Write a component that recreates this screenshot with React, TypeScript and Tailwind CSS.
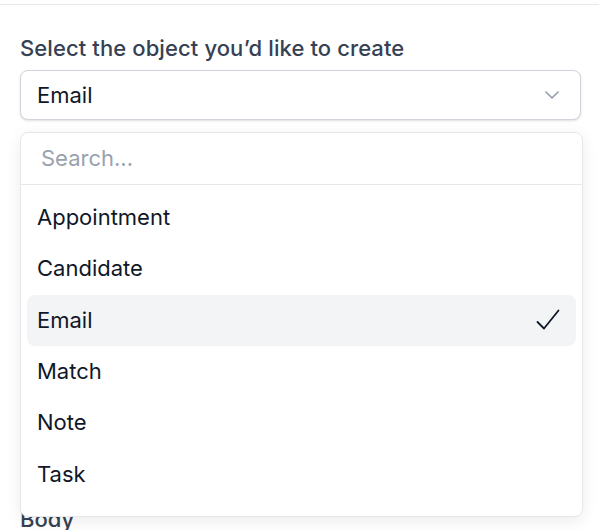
import { ChevronDown } from "lucide-react";

const OPTIONS = ["Appointment", "Candidate", "Email", "Match", "Note", "Task"];

export default function App() {
  const selected = "Email";

  return (
    <div className="min-h-screen bg-white font-['Inter',sans-serif] antialiased">
      <div className="mt-1 border-t border-gray-200 pl-5 pr-[18px] pt-7">
        <div className="relative">
          <label className="block text-[22px] font-medium leading-[30px] tracking-[0.1px] text-gray-700">
            Select the object you’d like to create
          </label>
          <button
            type="button"
            className="mt-[7px] flex h-[50px] w-full items-center justify-between rounded-lg border border-gray-300 bg-white px-4 text-left text-[22px] text-gray-900 shadow-sm"
          >
            <span>{selected}</span>
            <ChevronDown className="size-6 text-gray-400" strokeWidth={1.75} />
          </button>

          <div className="absolute left-0 right-[-2px] top-[99px] z-10 overflow-hidden rounded-lg border border-gray-200 bg-white shadow-[0_4px_16px_rgba(0,0,0,0.08)]">
            <div className="flex h-[52px] items-center border-b border-gray-200 px-5">
              <input
                placeholder="Search..."
                className="w-full bg-transparent text-[22px] text-gray-900 outline-none placeholder:text-gray-400"
              />
            </div>
            <ul className="px-[6px] pb-[16px] pt-[7px]">
              {OPTIONS.map((opt) => {
                const active = opt === selected;
                return (
                  <li
                    key={opt}
                    className={`flex h-[51.3px] items-center justify-between rounded-lg pl-[10px] pr-[16px] text-[22px] text-gray-900 ${
                      active ? "bg-gray-100" : ""
                    }`}
                  >
                    <span>{opt}</span>
                    {active && (
                      <svg
                        viewBox="0 0 24 24"
                        className="size-[24px]"
                        fill="none"
                        stroke="currentColor"
                        strokeWidth={1.8}
                        strokeLinecap="round"
                        strokeLinejoin="round"
                      >
                        <path d="M1.5 14 8 20.5 22.5 2.5" />
                      </svg>
                    )}
                  </li>
                );
              })}
            </ul>
          </div>

          <div className="h-[384px]" />
          <label className="block text-[22px] font-medium leading-[30px] text-gray-700">
            Body
          </label>
        </div>
      </div>
    </div>
  );
}
